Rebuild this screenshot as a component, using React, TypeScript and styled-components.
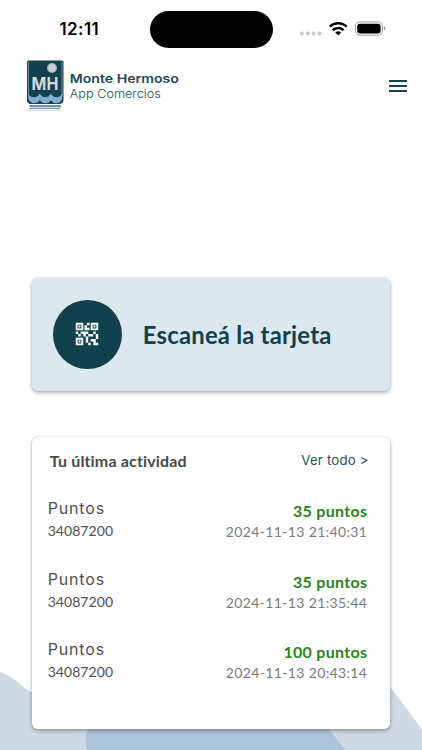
import React from "react";
import styled, { createGlobalStyle } from "styled-components";
import { MdMenu, MdQrCode2 } from "react-icons/md";

const GlobalStyle = createGlobalStyle`
  * { box-sizing: border-box; }
  body { margin: 0; background: #fff; }
`;

const Screen = styled.main`
  position: relative;
  width: 422px;
  height: 750px;
  overflow: hidden;
  background: #fff;
  font-family: Lato, sans-serif;
  isolation: isolate;
`;

const Waves = styled.svg`
  position: absolute;
  left: 0;
  bottom: 0;
  z-index: -1;
`;

const StatusBar = styled.div`
  display: grid;
  grid-template-columns: 149.5px 123px 1fr;
  height: 58px;
  padding-top: 11px;
`;

const Clock = styled.time`
  padding: 8px 0 0 59.5px;
  font: 600 17px/20px Inter, sans-serif;
  letter-spacing: 0.4px;
  color: #000;
`;

const Island = styled.div`
  height: 36.5px;
  border-radius: 19px;
  background: #000;
`;

const StatusIcons = styled.svg`
  display: block;
`;

const Header = styled.header`
  display: flex;
  justify-content: space-between;
  height: 56px;
  padding: 0 12px 0 20px;
`;

const MenuButton = styled.button`
  display: flex;
  width: 24px;
  height: 24px;
  margin-top: 15.5px;
  padding: 0;
  border: 0;
  background: none;
  color: #124450;
`;

const Card = styled.section`
  width: 358.6px;
  margin-left: 31.7px;
  border-radius: 6px;
  box-shadow: 0 2px 4px rgba(0, 0, 0, 0.28), 0 0 3px rgba(0, 0, 0, 0.15);
`;

const ScanCard = styled(Card)`
  display: flex;
  align-items: center;
  gap: 21px;
  height: 113.5px;
  margin-top: 163.5px;
  padding-left: 21.3px;
  background: #dce8f0;
`;

const ScanBadge = styled.div`
  display: grid;
  place-items: center;
  width: 68.8px;
  height: 68.8px;
  border-radius: 50%;
  background: #11414d;
  color: #fff;
`;

const ScanTitle = styled.h1`
  margin: 2px 0 0;
  font-size: 23.8px;
  line-height: 30px;
  font-weight: 700;
  letter-spacing: 0.23px;
  color: #11414d;
`;

const ActivityCard = styled(Card)`
  height: 292.5px;
  margin-top: 45.5px;
  padding: 13px 21.5px 0 16px;
  background: #fff;
`;

const ActivityHeader = styled.div`
  display: flex;
  justify-content: space-between;
  height: 47px;
  padding-left: 2px;
`;

const ActivityTitle = styled.h2`
  margin: 0;
  font-size: 16px;
  line-height: 22px;
  letter-spacing: 0.16px;
  color: #49494b;
`;

const SeeAll = styled.a`
  font: 400 13.2px/21px Inter, sans-serif;
  letter-spacing: 0.22px;
  color: #24505b;
`;

const Entry = styled.div`
  display: flex;
  justify-content: space-between;
  height: 70.6px;
`;

const Column = styled.div<{ $end?: boolean }>`
  display: flex;
  flex-direction: column;
  padding-top: ${(p) => (p.$end ? 3.6 : 0.8)}px;
  padding-right: ${(p) => (p.$end ? 1.5 : 0)}px;
  align-items: ${(p) => (p.$end ? "flex-end" : "flex-start")};
`;

const Kind = styled.span`
  font: 400 16px/22px Inter, sans-serif;
  letter-spacing: 0.85px;
  color: #505052;
`;

const Account = styled.span`
  font-size: 14px;
  line-height: 23px;
  letter-spacing: 0.05px;
  color: #505052;
`;

const Points = styled.strong`
  font-size: 16px;
  line-height: 22px;
  letter-spacing: 0.3px;
  color: #278617;
`;

const Stamp = styled.span`
  font-size: 14px;
  line-height: 20.4px;
  letter-spacing: 0.36px;
  color: #7a7a7c;
`;

const entries = [
  { points: 35, date: "2024-11-13 21:40:31" },
  { points: 35, date: "2024-11-13 21:35:44" },
  { points: 100, date: "2024-11-13 20:43:14" },
];

function Logo() {
  return (
    <svg width="170" height="55" viewBox="20 58 170 55">
      <path d="M27 62q0-1.500 1.500-1.500h33.500q1.500 0 1.500 1.500v38q0 4-4.500 4h-27.500q-4.500 0-4.500-4z" fill="#14414e" />
      <path d="M28.500 62v33.500M62 62v33.500" stroke="#7699ae" strokeWidth="0.9" />
      <path d="M28.300 93.500q1.500 3.700 5.700 3.700t5.700-3.700q1.700 3.700 5.600 3.700t5.600-3.700q1.700 3.700 5.600 3.700t5.700-3.700v5.300q-1.700 4.400-5.700 4.400-3.500 0-5.600-3-2 3-5.600 3t-5.600-3q-2 3-5.700 3-4 0-5.700-4.400z" fill="#82add0" />
      <path d="M29.500 106h31.300" stroke="#4b7487" strokeWidth="1.600" />
      <path d="M29.500 108.300h31.300" stroke="#7c9fb6" strokeWidth="1.400" />
      <path d="M29.500 110.200h31.300" stroke="#c1d2dc" strokeWidth="1" />
      <circle cx="52" cy="68" r="5" fill="#a6b7bc" />
      <circle cx="52" cy="68" r="3.700" fill="#c9d3d5" />
      <text x="31.600" y="89.500" fontFamily="Inter, sans-serif" fontSize="18" fontWeight="700" fill="#d2dadd" textLength="26.800" lengthAdjust="spacingAndGlyphs">MH</text>
      <text x="69.800" y="82.800" fontFamily="Inter, sans-serif" fontSize="12.300" fontWeight="600" fill="#1d4753" textLength="109" lengthAdjust="spacingAndGlyphs">Monte Hermoso</text>
      <text x="69.800" y="97.600" fontFamily="Inter, sans-serif" fontSize="12" fontWeight="300" fill="#254e59" textLength="91" lengthAdjust="spacingAndGlyphs">App Comercios</text>
    </svg>
  );
}

export default function App() {
  return (
    <>
      <GlobalStyle />
      <Screen>
        <Waves width="422" height="100" viewBox="0 650 422 100">
          <path d="M0 672C11 675 20 684 26 689Q29 692 32 692H180V750H0Z" fill="#cddae5" />
          <path d="M300 650H362L422 729V750H300Z" fill="#cddae5" />
          <path d="M92 722C86 732 84 741 87 750H345L322 720H100Z" fill="#adc3d8" />
        </Waves>
        <StatusBar>
          <Clock>12:11</Clock>
          <Island />
          <StatusIcons width="120" height="38" viewBox="272.5 11 120 38">
            <g fill="#c9c9c9">
              <circle cx="301.400" cy="33.400" r="2" />
              <circle cx="307.300" cy="33.400" r="2" />
              <circle cx="313.100" cy="33.400" r="2" />
              <circle cx="319" cy="33.400" r="2" />
            </g>
            <g fill="none" stroke="#000" strokeWidth="2.500">
              <path d="M329.200 26.700a12 12 0 0 1 17 0" />
              <path d="M332.200 30.200a7.700 7.700 0 0 1 11 0" />
            </g>
            <path d="M334.800 32.500q2.900-2.300 5.800 0l-2.900 2.900z" fill="#000" />
            <rect x="354.900" y="21.900" width="27" height="13.300" rx="4.200" fill="none" stroke="#a0a0a0" />
            <rect x="356.700" y="23.700" width="23.400" height="9.700" rx="2.600" fill="#000" />
            <path d="M383.300 26.300q1.700.6 1.700 2.200t-1.700 2.300z" fill="#a0a0a0" />
          </StatusIcons>
        </StatusBar>
        <Header>
          <Logo />
          <MenuButton aria-label="Menú"><MdMenu size={24} /></MenuButton>
        </Header>
        <ScanCard>
          <ScanBadge><MdQrCode2 size={30} /></ScanBadge>
          <ScanTitle>Escaneá la tarjeta</ScanTitle>
        </ScanCard>
        <ActivityCard>
          <ActivityHeader>
            <ActivityTitle>Tu última actividad</ActivityTitle>
            <SeeAll>Ver todo &gt;</SeeAll>
          </ActivityHeader>
          {entries.map((e) => (
            <Entry key={e.date}>
              <Column>
                <Kind>Puntos</Kind>
                <Account>34087200</Account>
              </Column>
              <Column $end>
                <Points>{e.points} puntos</Points>
                <Stamp>{e.date}</Stamp>
              </Column>
            </Entry>
          ))}
        </ActivityCard>
      </Screen>
    </>
  );
}
